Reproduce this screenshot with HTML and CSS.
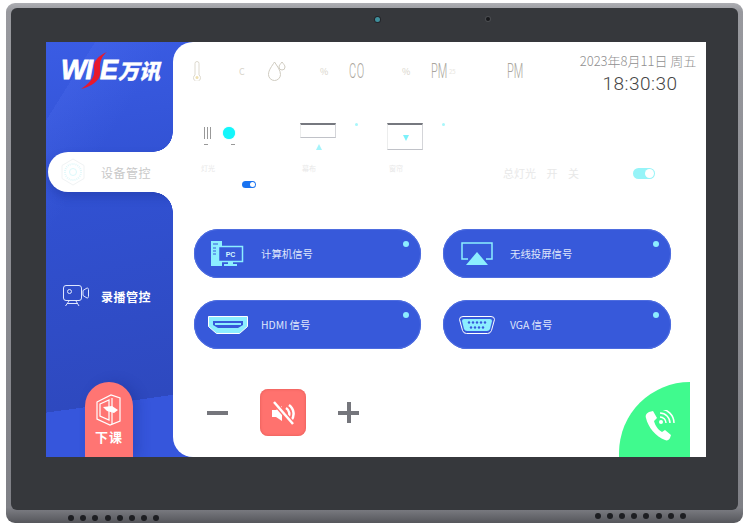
FILE: index.html
```html
<!DOCTYPE html>
<html lang="zh">
    <head>
        <meta charset="UTF-8" />
        <title>中控面板</title>
        <link rel="stylesheet" href="styles.css">
    </head>
    <body>
        <div class="device">
            <div class="bezel">
                <div class="cam-row">
                    <span class="lens"></span>
                    <span class="sensor"></span>
                </div>
                <div class="screen">
                    <aside class="sidebar">
                        <div class="logo">
                            <span class="logo-en">WI</span><span class="logo-en logo-e">E</span><span class="logo-cn">万讯</span>
                            <svg class="logo-s" viewBox="0 0 26 37" width="26" height="37">
                                <path d="M26 0C17 4 13 9 13 14c0 4 1 7-1 11-2 4-6 8-12 12 8-2 15-6 18-11 2-4 1-8 1-12 0-5 2-10 7-14z" fill="#e8192c" />
                            </svg>
                        </div>
                        <div class="tab tab-active">
                            <svg class="tab-hex" viewBox="0 0 24 28" width="24" height="28">
                                <path d="M12 1 23 7.500v13L12 27 1 20.500v-13z" fill="none" stroke="#f0f3f4" />
                                <circle cx="12" cy="14" r="8" fill="none" stroke="#e2f8fa" stroke-dasharray="1 1" stroke-width="2" />
                                <circle cx="12" cy="14" r="3.500" fill="none" stroke="#dcfafc" />
                            </svg>
                            <span>设备管控</span>
                        </div>
                        <div class="tab tab-record">
                            <svg viewBox="0 0 26 22" width="26" height="22" fill="none" stroke="#dfe7ff" stroke-width="1">
                                <rect x="0.500" y="0.500" width="18" height="15" rx="2.500" />
                                <circle cx="6.500" cy="6.500" r="2" />
                                <path d="M20 5.500 24 3c1 0 1.500 .5 1.500 1.500v7c0 1-.5 1.500-1.500 1.500l-4-2.500zM6 16 2.500 21M13 16l3 5M4 18.500h11" />
                            </svg>
                            <span>录播管控</span>
                        </div>
                        <div class="class-over">
                            <svg viewBox="0 0 26 33" width="26" height="33" fill="none" stroke="#fff" stroke-width="1.200">
                                <path d="M1 9 15 2l9 3v23l-10 4-13-6z" />
                                <path d="M4 11 13 7v20l-9-4zM16 5v26" />
                                <path d="M7 14l9-1 6 4-4 3-7-2z" fill="#fff" stroke="none" />
                            </svg>
                            <span>下课</span>
                        </div>
                    </aside>

                    <main class="main">
                        <div class="top">
                            <div class="sensors">
                                <svg class="thermo" viewBox="0 0 10 20" width="10" height="20" fill="none" stroke="#ddd9ce">
                                    <path d="M3 14V2.500a2 2 0 0 1 4 0V14a3.500 3.500 0 1 1-4 0z" />
                                    <circle cx="5" cy="16.500" r="1.500" fill="#efe0b0" stroke="none" />
                                </svg>
                                <span class="unit unit-c">C</span>
                                <svg class="drops" viewBox="0 0 18 20" width="18" height="20" fill="none" stroke="#cfcbc0">
                                    <path d="M6.500 1C9 5 12.500 9 12.500 13.500a6 6 0 0 1-12 0C.5 9 4 5 6.500 1z" />
                                    <path d="M14 1c1.500 2 3 3.500 3 5a3 3 0 0 1-6 0c0-1.500 1.500-3 3-5z" />
                                </svg>
                                <span class="unit unit-pct">%</span>
                                <span class="reading reading-co">CO</span>
                                <span class="unit unit-pct2">%</span>
                                <span class="reading reading-pm">PM</span>
                                <span class="unit unit-sub">25</span>
                                <span class="reading reading-pm2">PM</span>
                            </div>
                            <div class="clock">
                                <div class="date">2023年8月11日 周五</div>
                                <div class="time">18:30:30</div>
                            </div>
                        </div>

                        <div class="controls">
                            <div class="ctl ctl-light">
                                <div class="light-row">
                                    <span class="bars"></span>
                                    <span class="cyan-dot"></span>
                                </div>
                                <div class="ticks"><span></span><span></span></div>
                                <div class="faint faint-light">灯光</div>
                                <span class="toggle toggle-blue"></span>
                            </div>
                            <div class="ctl ctl-screen">
                                <div class="shade"><span class="shade-up"></span></div>
                                <i class="dot-small"></i>
                                <div class="faint">幕布</div>
                            </div>
                            <div class="ctl ctl-screen ctl-screen2">
                                <div class="shade"><span class="shade-down"></span></div>
                                <i class="dot-small"></i>
                                <div class="faint">窗帘</div>
                            </div>
                            <div class="ctl-master">
                                <span class="faint faint-master">总灯光 开 关</span>
                                <span class="toggle toggle-cyan"></span>
                            </div>
                        </div>

                        <div class="signals">
                            <div class="signal">
                                <div class="sig-icon">
                                    <svg viewBox="0 0 33 25" width="33" height="25">
                                        <path d="M0 0h11v5H7v11h4v9H0z" fill="#8ceeff" />
                                        <path d="M2 3h5M2 7h3M2 10h3M2 13h3" stroke="#3759da" />
                                        <rect x="7.500" y="5.500" width="24" height="15" fill="#3759da" stroke="#8ceeff" stroke-width="1.500" />
                                        <path d="M17 21h5v2h4v2H13v-2h4z" fill="#8ceeff" />
                                        <text x="19.500" y="16" text-anchor="middle" class="pc-text">PC</text>
                                    </svg>
                                </div>
                                <span>计算机信号</span>
                                <i class="led"></i>
                            </div>
                            <div class="signal">
                                <div class="sig-icon">
                                    <svg viewBox="0 0 32 23" width="32" height="23">
                                        <path d="M7 17H1V1h30v16h-6" fill="none" stroke="#8ceeff" stroke-width="1.500" />
                                        <path d="M16 10 27 23H5z" fill="#8ceeff" />
                                    </svg>
                                </div>
                                <span>无线投屏信号</span>
                                <i class="led"></i>
                            </div>
                            <div class="signal">
                                <div class="sig-icon">
                                    <svg viewBox="0 0 40 18" width="40" height="18">
                                        <path d="M.5 .5h39v10l-8 7H8.500l-8-7z" fill="#8ceeff" stroke="#fff" stroke-width="1" />
                                        <path d="M5 5h30v4l-5 3H10L5 9z" fill="#3759da" />
                                        <rect x="7" y="7" width="26" height="2" fill="#8ceeff" />
                                    </svg>
                                </div>
                                <span>HDMI 信号</span>
                                <i class="led"></i>
                            </div>
                            <div class="signal">
                                <div class="sig-icon">
                                    <svg viewBox="0 0 36 18" width="36" height="18">
                                        <path d="M4 .5h28q3.500 0 3.500 3l-3 11q-1 3-4 3H7.500q-3 0-4-3L.5 3.500q0-3 3.500-3z" fill="#3759da" stroke="#fff" stroke-width="1" />
                                        <path d="M5 3h26q2 0 2 2l-2 8q-1 2-3 2H8q-2 0-3-2L3 5q0-2 2-2z" fill="#8ceeff" />
                                        <g fill="#3759da">
                                            <circle cx="10" cy="6.500" r="1.200" /><circle cx="14" cy="6.500" r="1.200" /><circle cx="18" cy="6.500" r="1.200" /><circle cx="22" cy="6.500" r="1.200" /><circle cx="26" cy="6.500" r="1.200" />
                                            <circle cx="12" cy="11.500" r="1.200" /><circle cx="16" cy="11.500" r="1.200" /><circle cx="20" cy="11.500" r="1.200" /><circle cx="24" cy="11.500" r="1.200" />
                                        </g>
                                    </svg>
                                </div>
                                <span>VGA 信号</span>
                                <i class="led"></i>
                            </div>
                        </div>

                        <div class="volume">
                            <span class="vol-btn vol-minus"></span>
                            <div class="mute">
                                <svg viewBox="0 0 24 24" width="24" height="24" fill="#fff">
                                    <path d="M1 9h4l6-4v15l-6-4H1z" />
                                    <path d="M15 7a7 7 0 0 1 2 10M18 4a11 11 0 0 1 2 16" fill="none" stroke="#fff" stroke-width="2.500" />
                                    <path d="M3 1l19 22" stroke="#ff726e" stroke-width="5" />
                                    <path d="M3 1l19 22" stroke="#fff" stroke-width="2.500" />
                                </svg>
                            </div>
                            <span class="vol-btn vol-plus"></span>
                        </div>

                        <div class="call">
                            <svg viewBox="0 0 30 32" width="30" height="32" fill="#fff">
                                <path d="M4 2 8 1l4 7-3 3c1 4 4 9 8 11l3-2 6 5-1 3c-1 2-3 3-5 2C11 27 3 17 1 8c-1-3 1-5 3-6z" />
                                <g fill="none" stroke="#fff" stroke-width="1.500">
                                    <path d="M15 7a6 6 0 0 1 6 6M15 3a10 10 0 0 1 10 10M15 -1a14 14 0 0 1 14 14" />
                                </g>
                                <circle cx="16" cy="12" r="2" />
                            </svg>
                        </div>
                    </main>
                </div>
            </div>
            <div class="speakers">
                <div class="holes"><i></i><i></i><i></i><i></i><i></i><i></i><i></i><i></i></div>
                <div class="holes"><i></i><i></i><i></i><i></i><i></i><i></i><i></i><i></i></div>
            </div>
        </div>
    </body>
</html>
```

FILE: styles.css
```css
body {
    margin: 0;
    background: white;
    font-family: "Noto Sans CJK SC", "Liberation Sans", sans-serif;
}

/* 外壳 */
.device {
    width: 737px;
    height: 520px;
    margin: 3px 0 0 6px;
    padding: 5px 5px 0 5px;
    box-sizing: border-box;
    background: linear-gradient(#adaeb3, #98999e 8px, #7f8086 97%, #55565b);
    border-radius: 9px;
}
.bezel {
    height: 502px;
    box-sizing: border-box;
    padding: 0 32px 0 35px;
    background: #36383c;
    border-radius: 6px;
}
.cam-row {
    height: 34px;
    box-sizing: border-box;
    display: flex;
    padding: 9px 0 0 329px;
    gap: 106px;
}
.lens {
    width: 5px;
    height: 5px;
    border-radius: 50%;
    background: #3f8f9c;
    box-shadow: 0 0 0 1px #23252a;
}
.sensor {
    width: 4px;
    height: 4px;
    border-radius: 50%;
    background: #17181b;
    box-shadow: 0 0 0 1px #4a4c50;
}
.speakers {
    display: flex;
    justify-content: space-between;
    padding: 5px 52px 0 57px;
}
.holes {
    display: flex;
    gap: 6.200px;
}
.holes:last-child {
    margin-top: -2px;
}
.holes i {
    width: 6px;
    height: 6px;
    border-radius: 50%;
    background: #1d1e22;
}

/* 屏幕 */
.screen {
    width: 660px;
    height: 415px;
    display: flex;
    overflow: hidden;
    background-color: #2f4cc6;
    background-image:
        linear-gradient(172deg, transparent 85%, #3656dc 85%),
        linear-gradient(122deg, transparent 12%, rgba(90, 120, 245, 0.18) 12%, transparent 30%),
        linear-gradient(170deg, #3a5ce4, #3151d2 35%, #2e49bf 84%);
    background-size: 150px 100%;
    background-repeat: no-repeat;
}
.sidebar {
    width: 127px;
    flex-shrink: 0;
    display: flex;
    flex-direction: column;
    align-items: flex-end;
    position: relative;
}
.logo {
    position: relative;
    height: 110px;
    width: 127px;
    box-sizing: border-box;
    padding: 13px 0 0 15px;
    color: white;
    white-space: nowrap;
    font-style: italic;
    font-weight: 900;
}
.logo-en {
    font: italic 900 27px/30px "Liberation Sans", sans-serif;
    letter-spacing: -1px;
    -webkit-text-stroke: 0.800px white;
}
.logo-e {
    margin-left: 8px;
}
.logo-cn {
    font-size: 21px;
    line-height: 30px;
    margin-left: 1px;
    -webkit-text-stroke: 0.400px white;
}
.logo-s {
    position: absolute;
    left: 35px;
    top: 10px;
}
.tab {
    display: flex;
    align-items: center;
    white-space: nowrap;
}
.tab-active {
    position: relative;
    width: 125px;
    height: 40px;
    box-sizing: border-box;
    padding-left: 13px;
    gap: 16px;
    background: white;
    border-radius: 20px 0 0 20px;
    box-shadow: 0 5px 10px rgba(20, 40, 130, 0.3);
    color: #c8c8c8;
    font-size: 12px;
    letter-spacing: 0.500px;
}
.tab-active::before,
.tab-active::after {
    content: "";
    position: absolute;
    right: 0;
    width: 20px;
    height: 20px;
}
.tab-active::before {
    top: -20px;
    background: radial-gradient(circle at 0 0, transparent 19.500px, white 20px);
}
.tab-active::after {
    bottom: -20px;
    background: radial-gradient(circle at 0 100%, transparent 19.500px, white 20px);
}
.tab-record {
    width: 127px;
    box-sizing: border-box;
    margin-top: 93px;
    padding-left: 17px;
    gap: 12px;
    color: white;
    font-size: 12px;
    font-weight: 700;
    letter-spacing: 0.500px;
}
.class-over {
    position: absolute;
    left: 39px;
    bottom: 0;
    width: 48px;
    height: 75px;
    box-sizing: border-box;
    padding-top: 11px;
    display: flex;
    flex-direction: column;
    align-items: center;
    gap: 2px;
    background: #ff7573;
    border-radius: 24px 24px 0 0;
    box-shadow: 6px 0 12px rgba(20, 40, 130, 0.25);
    color: white;
    font-size: 13px;
    font-weight: 700;
    line-height: 18px;
    letter-spacing: 1px;
}

/* 主区域 */
.main {
    position: relative;
    flex: 1;
    background: white;
    border-radius: 20px 0 0 20px;
}
.top {
    height: 75px;
    display: flex;
    justify-content: space-between;
}
.sensors {
    flex: 1;
    height: 58px;
    display: flex;
    align-items: center;
    padding-left: 19px;
    color: #a9a59c;
}
.sensors > * {
    flex-shrink: 0;
}
.unit {
    width: 8px;
    font-size: 9px;
    color: #d8d4ca;
}
.unit-c { margin-left: 37px; }
.drops { margin-left: 21px; }
.unit-pct { margin-left: 34px; }
.unit-pct2 { margin-left: 36px; }
.unit-sub {
    margin-left: 1px;
    font-size: 6px;
    color: #e8e6e0;
}
.reading {
    width: 17px;
    font: 300 20px/24px Roboto, "Liberation Sans", sans-serif;
    transform: scaleX(0.55);
    transform-origin: left;
}
.reading-co { margin-left: 21px; letter-spacing: 1px; }
.reading-pm { margin-left: 21px; }
.reading-pm2 { margin-left: 50px; }
.clock {
    width: 118px;
    margin-right: 9px;
    padding-top: 10px;
    text-align: center;
    white-space: nowrap;
}
.date {
    font-size: 13px;
    font-weight: 300;
    line-height: 17px;
    color: #8f8f8f;
}
.time {
    font: 300 19px/24px Roboto, "Liberation Sans", sans-serif;
    letter-spacing: 0.500px;
    margin: 3px 0 0 4px;
    color: #444;
}

.controls {
    position: relative;
    height: 112px;
}
.ctl,
.ctl-master {
    position: absolute;
}
.ctl-light { left: 31px; top: 10px; width: 60px; height: 70px; }
.light-row {
    display: flex;
    align-items: center;
    gap: 12px;
}
.bars {
    width: 7px;
    height: 12px;
    background: repeating-linear-gradient(90deg, #999 0 1px, white 1px 3px);
}
.cyan-dot {
    width: 12px;
    height: 12px;
    border-radius: 50%;
    background: #14f6fb;
    box-shadow: 0 0 1px #14f6fb;
}
.ticks {
    display: flex;
    gap: 23px;
    margin-top: 5px;
}
.ticks span {
    width: 4px;
    height: 1px;
    background: #999;
}
.faint {
    color: #e8e8e8;
    font-size: 7px;
    line-height: 10px;
    white-space: nowrap;
}
.faint-light { margin: 18px 0 0 -3px; }
.toggle {
    position: absolute;
    width: 14px;
    height: 7px;
    border-radius: 4px;
}
.toggle::after {
    content: "";
    position: absolute;
    right: 1px;
    top: 1px;
    width: 5px;
    height: 5px;
    border-radius: 50%;
    background: white;
}
.toggle-blue {
    left: 38px;
    top: 54px;
    background: #1a73f0;
}
.ctl-screen { left: 127px; top: 6px; }
.ctl-screen2 { left: 214px; }
.shade {
    position: relative;
    width: 34px;
    height: 12px;
    border-top: 2px solid #76787f;
    border-left: 1px solid #eceded;
    border-right: 1px solid #d4d5d9;
    border-bottom: 1px solid #c0c2c8;
    margin-bottom: 25px;
}
.shade-up,
.shade-down {
    position: absolute;
    left: 15px;
    width: 0;
    height: 0;
    border-left: 3px solid transparent;
    border-right: 3px solid transparent;
}
.shade-up {
    top: 19px;
    border-bottom: 6px solid #a5f4fb;
}
.shade-down {
    top: 10px;
    border-top: 6px solid #7cf1fa;
}
.ctl-screen2 .shade {
    height: 24px;
    margin-bottom: 13px;
}
.ctl-screen .faint {
    margin-left: 2px;
}
.dot-small {
    position: absolute;
    left: 55px;
    top: 0;
    width: 3px;
    height: 3px;
    background: #a8f7fb;
    border-radius: 50%;
}
.ctl-master {
    left: 330px;
    top: 49px;
    width: 152px;
    display: flex;
    justify-content: space-between;
    align-items: center;
}
.faint-master {
    font-size: 11px;
    line-height: 14px;
    word-spacing: 8px;
}
.toggle-cyan {
    position: relative;
    width: 22px;
    height: 11px;
    border-radius: 6px;
    background: #96f4f8;
}
.toggle-cyan::after {
    top: 1px;
    width: 9px;
    height: 9px;
}

/* 信号源 */
.signals {
    display: grid;
    grid-template-columns: 227px 228px;
    column-gap: 22px;
    row-gap: 22px;
    margin-left: 21px;
}
.signal {
    position: relative;
    height: 49px;
    display: flex;
    align-items: center;
    border-radius: 25px;
    background: #3759da;
    box-shadow: inset 0 0 0 1px #4e6de0;
    color: #dfe6fb;
    font-size: 10.400px;
    white-space: nowrap;
}
.sig-icon {
    width: 67px;
    flex-shrink: 0;
    display: flex;
    justify-content: center;
    line-height: 0;
}
.pc-text {
    fill: #d4f8ff;
    font: bold 7px "Liberation Sans", sans-serif;
}
.led {
    position: absolute;
    right: 12px;
    top: 12px;
    width: 6px;
    height: 6px;
    border-radius: 50%;
    background: #8ceeff;
}

/* 音量 */
.volume {
    display: flex;
    align-items: center;
    margin: 40px 0 0 34px;
}
.vol-btn {
    position: relative;
    width: 21px;
    height: 21px;
}
.vol-minus::before,
.vol-plus::before {
    content: "";
    position: absolute;
    left: 0;
    top: 9px;
    width: 21px;
    height: 4px;
    background: #75767c;
}
.vol-plus::after {
    content: "";
    position: absolute;
    left: 9px;
    top: 0;
    width: 4px;
    height: 21px;
    background: #75767c;
}
.mute {
    width: 46px;
    height: 47px;
    margin: 0 32px 0 32px;
    display: flex;
    align-items: center;
    justify-content: center;
    background: #ff726e;
    border-radius: 8px;
    box-shadow: inset 0 0 3px #e05854;
}
.call {
    position: absolute;
    right: 16px;
    bottom: 0;
    width: 71px;
    height: 75px;
    box-sizing: border-box;
    padding: 28px 0 0 26px;
    background: #40fa8e;
    border-radius: 75px 0 0 0;
}
```
